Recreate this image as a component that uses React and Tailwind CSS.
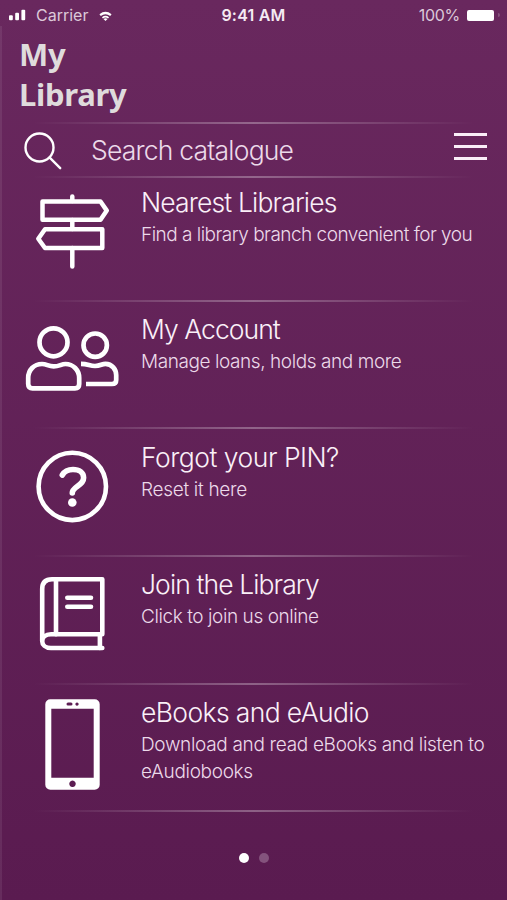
import { clsx } from 'clsx';

function SignpostIcon() {
  return (
    <g strokeWidth="4.5">
      <path d="M20.5 23.5H78.5L84.8 32.6L78.5 41.8H20.5Z" />
      <path d="M80.3 51.3H23L16.3 60.8L23 70H80.3Z" />
      <path d="M50.3 18.5V23M50.3 42V51M50.3 70V88.5" />
    </g>
  );
}

function PeopleIcon() {
  return (
    <g strokeWidth="4.7">
      <circle cx="31.5" cy="41.3" r="14" />
      <path d="M6.2 77C6.2 69 12 63 20 63C25 63 26 65.4 31.7 65.4C37.5 65.4 39 63 43.5 63C51 63 57.2 69 57.2 77V83Q57.2 87.3 53 87.3H10.5Q6.2 87.3 6.2 83Z" />
      <circle cx="73.2" cy="44.2" r="11.7" />
      <path strokeLinecap="butt" d="M59 62.8C66 62.8 67.5 65 73 65C78.5 65 79.5 62.8 83.5 62.8C90 62.8 94.2 68.5 94.2 74V79Q94.2 83 90 83H64" />
    </g>
  );
}

function QuestionIcon() {
  return (
    <g strokeWidth="4.6">
      <circle cx="50.3" cy="57.4" r="33.7" />
      <path strokeWidth="5.6" d="M40.3 46C42.5 42.3 46 40.5 51 40.5C57.3 40.5 61.6 43.7 61.6 48.7C61.6 52.6 59.5 54.4 55.5 57.3C51.7 60 50.3 61.5 50.3 64" />
      <circle cx="50.3" cy="73.5" r="4.3" fill="white" stroke="none" />
    </g>
  );
}

function BookIcon() {
  return (
    <g strokeWidth="4.6">
      <path d="M20.2 85V33Q20.2 23.2 30 23.2H80.3V78.3H29C17.3 78.3 17.3 92 29 92H80.3" />
      <path d="M34 23.2V78.3M77.9 78.3V92M45.3 41.7H69M45.3 50.7H69" />
    </g>
  );
}

function PhoneIcon() {
  return (
    <path
      fill="white"
      stroke="none"
      fillRule="evenodd"
      d="M28.3 15.3H72.7a5 5 0 0 1 5 5V100.7a5 5 0 0 1-5 5H28.3a5 5 0 0 1-5-5V20.3a5 5 0 0 1 5-5ZM29.3 24.7V93.7H71.7V24.7ZM50.5 96.6a3.2 3.2 0 1 0 .01 0ZM46 18.6a1.5 1.5 0 0 0 0 3h3a1.5 1.5 0 0 0 0-3ZM55 18.5a1.6 1.6 0 1 0 .01 0Z"
    />
  );
}

const menuItems = [
  { title: 'Nearest Libraries', text: ['Find a library branch convenient for you'], icon: SignpostIcon, height: 'h-[122px]', pad: 'pt-2', titleTracking: 'tracking-[-0.85px]', textTracking: 'tracking-[-0.52px]' },
  { title: 'My Account', text: ['Manage loans, holds and more'], icon: PeopleIcon, height: 'h-[125px]', pad: 'pt-[11px]', iconOffset: '-mt-px', titleTracking: 'tracking-[-0.95px]', textTracking: 'tracking-[-0.42px]' },
  { title: 'Forgot your PIN?', text: ['Reset it here'], icon: QuestionIcon, height: 'h-[126px]', pad: 'pt-3', titleTracking: 'tracking-[-0.5px]', textTracking: 'tracking-[-0.3px]' },
  { title: 'Join the Library', text: ['Click to join us online'], icon: BookIcon, height: 'h-[126px]', pad: 'pt-[11px]', iconOffset: '-mt-px', titleTracking: 'tracking-[-0.9px]', textTracking: 'tracking-[-0.42px]' },
  { title: 'eBooks and eAudio', text: ['Download and read eBooks and listen to', 'eAudiobooks'], icon: PhoneIcon, height: 'h-[125px]', pad: 'pt-[11px]', iconOffset: '-mt-px', titleTracking: 'tracking-[-0.62px]', textTracking: 'tracking-[-0.32px]' },
];

function Divider() {
  return <div className="mx-[33px] h-0.5 shrink-0 bg-linear-to-r from-white/0 via-white/30 to-white/0" />;
}

function StatusBar() {
  return (
    <div className="mb-px grid h-[30px] shrink-0 grid-cols-3 items-center pl-[9px] pr-[7px] text-[16px] text-[#dcc8d9]">
      <div className="flex items-center">
        <svg className="h-3 w-[17px]" viewBox="0 0 17 12" fill="white">
          <rect x="0" y="6.3" width="3.8" height="4.9" rx="1" />
          <rect x="6.2" y="3.8" width="3.8" height="7.4" rx="1" />
          <rect x="12.4" y="0.7" width="3.8" height="10.5" rx="1" />
        </svg>
        <span className="ml-2.5">Carrier</span>
        <svg className="ml-[11px] mt-0.5 h-3 w-[13px]" viewBox="0 0 14 12" fill="none" stroke="white">
          <path d="M1.2 5Q7 0.5 12.8 5" strokeWidth="2.4" />
          <path d="M3.7 8Q7 5.4 10.3 8" strokeWidth="1.8" />
          <path d="M4.8 9.2Q7 7.6 9.2 9.2L7 11.5Z" fill="white" stroke="none" />
        </svg>
      </div>
      <div className="-ml-0.5 text-center font-semibold tracking-[0.2px] text-[#f5eaf3]">9:41 AM</div>
      <div className="flex items-center justify-end">
        <span className="tracking-[-0.3px]">100%</span>
        <span className="ml-[7px] h-[11px] w-[27px] rounded-[2px] bg-white" />
        <span className="ml-1 h-1 w-0.5 rounded-r bg-white/20" />
      </div>
    </div>
  );
}

function MenuItem({ item }) {
  const Icon = item.icon;
  return (
    <>
      <button className={clsx('flex w-full shrink-0 items-start pl-[22px] text-left', item.height)}>
        <svg className={clsx('h-[110px] w-[100px] shrink-0', item.iconOffset)} viewBox="0 0 100 110" fill="none" stroke="white" strokeLinecap="round" strokeLinejoin="round">
          <Icon />
        </svg>
        <span className={clsx('ml-[19px] block whitespace-nowrap font-light', item.pad)}>
          <span className={clsx('block text-[26.5px] leading-8 text-[#faf0f8]', item.titleTracking)}>{item.title}</span>
          {item.text.map((line, i) => (
            <span key={line} className={clsx('block text-[19px] leading-[27px] text-[#ecdaea]', i === 0 && 'mt-[3px]', item.textTracking)}>{line}</span>
          ))}
        </span>
      </button>
      <Divider />
    </>
  );
}

export default function App() {
  return (
    <div className="relative flex h-[900px] w-[507px] flex-col overflow-hidden bg-linear-to-b from-[#69285e] to-[#5a1b50] font-['Inter','Liberation_Sans',sans-serif]">
      {/* light seam along the left edge, below the status bar */}
      <div className="absolute bottom-0 left-0 top-[26px] w-0.5 bg-white/8" />
      <StatusBar />
      <h1 className="h-[91px] shrink-0 pl-[19px] pt-[3px] font-['Noto_Sans',sans-serif] text-[31px] font-bold leading-10 tracking-[-0.3px] text-[#dfdbdc]">
        My<br />Library
      </h1>
      <Divider />
      <div className="flex h-[52px] shrink-0 items-center pl-[22px] pr-5 pt-px">
        <svg className="h-[42px] w-[42px]" viewBox="0 0 42 42" fill="none" stroke="white" strokeWidth="2.4" strokeLinecap="round">
          <circle cx="17.5" cy="17.5" r="14" />
          <path d="M27.7 27.7L38.2 38.2" />
        </svg>
        <span className="ml-[27px] mt-px text-[26.5px] font-light tracking-[-0.8px] text-[#ecdaea]">Search catalogue</span>
        <div className="mb-[9px] ml-auto flex w-[33px] flex-col gap-[9px]">
          <span className="h-[3px] bg-[#faeef8]" />
          <span className="h-[3px] bg-[#faeef8]" />
          <span className="h-[3px] bg-[#faeef8]" />
        </div>
      </div>
      <Divider />
      {menuItems.map(item => <MenuItem key={item.title} item={item} />)}
      <div className="mt-[41px] flex justify-center gap-2.5">
        <span className="h-2.5 w-2.5 rounded-full bg-white" />
        <span className="h-2.5 w-2.5 rounded-full bg-[#84537d]" />
      </div>
    </div>
  );
}
